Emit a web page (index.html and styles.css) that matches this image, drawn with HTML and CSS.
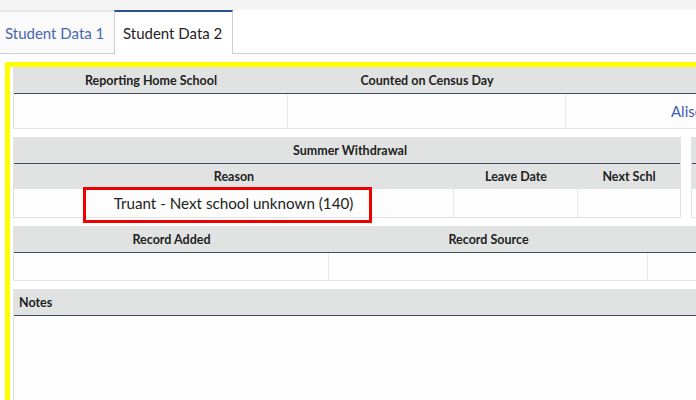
FILE: index.html
```html
<!DOCTYPE html>
<html>
<head>
<meta charset="utf-8">
<link rel="stylesheet" href="styles.css">
</head>
<body>
<div class="topbar"></div>
<div class="tabs">
  <div class="tab first">Student Data 1</div>
  <div class="tab active">Student Data 2</div>
  <div class="tab-fill"></div>
</div>
<div class="frame">
  <div class="panel p1">
    <div class="row hdr">
      <div class="cell c1">Reporting Home School</div>
      <div class="cell c2">Counted on Census Day</div>
      <div class="cell c3"></div>
    </div>
    <div class="row data d1">
      <div class="cell c1"></div>
      <div class="cell c2"></div>
      <div class="cell c3 link">Alison</div>
    </div>
  </div>

  <div class="pair">
    <div class="panel p2">
      <div class="row hdr span">Summer Withdrawal</div>
      <div class="row sub">
        <div class="cell w1">Reason</div>
        <div class="cell w2">Leave Date</div>
        <div class="cell w3">Next Schl</div>
      </div>
      <div class="row data d2">
        <div class="cell w1 val">Truant - Next school unknown (140)</div>
        <div class="cell w2"></div>
        <div class="cell w3"></div>
      </div>
      <div class="highlight"></div>
    </div>
    <div class="panel p2b">
      <div class="row hdr"></div>
      <div class="row sub"></div>
      <div class="row data d2"></div>
    </div>
  </div>

  <div class="panel p3">
    <div class="row hdr">
      <div class="cell r1">Record Added</div>
      <div class="cell r2">Record Source</div>
      <div class="cell r3"></div>
    </div>
    <div class="row data d3">
      <div class="cell r1"></div>
      <div class="cell r2"></div>
      <div class="cell r3"></div>
    </div>
  </div>

  <div class="panel p4">
    <div class="row hdr left">Notes</div>
    <div class="notes-body"></div>
  </div>
</div>
</body>
</html>
```
FILE: styles.css
```css
* { box-sizing: border-box; }
html, body {
  margin: 0;
  padding: 0;
  background: #ffffff;
  overflow: hidden;
  width: 696px;
  height: 400px;
}
body {
  font-family: Lato, "Noto Sans", sans-serif;
  color: #222;
}
.topbar {
  height: 10px;
  background: #f4f4f4;
}
.tabs {
  display: flex;
  height: 44px;
}
.tab {
  height: 44px;
  padding: 0 7px;
  display: flex;
  align-items: center;
  font-size: 15px;
  border-top: 2px solid #e6e6e6;
  border-bottom: 1px solid #cfcfcf;
  color: #4866b0;
  background: #fafafa;
}
.tab.first {
  width: 114px;
  padding-left: 5px;
}
.tab.active {
  width: 119px;
  padding-left: 8px;
  color: #222;
  background: #fff;
  border-top: 2px solid #2c4f9e;
  border-left: 1px solid #cfcfcf;
  border-right: 1px solid #cfcfcf;
  border-bottom: none;
}
.tab-fill {
  flex: 1;
  border-bottom: 1px solid #cfcfcf;
}
.frame {
  margin-top: 8px;
  margin-left: 5px;
  width: 1000px;
  height: 400px;
  border: 5px solid #ffff00;
  border-bottom: none;
  padding: 0 0 0 3px;
  display: flex;
  flex-direction: column;
  gap: 8px;
}
.panel {
  border: 1px solid #e3e3e3;
  background: #fdfdfd;
  position: relative;
}
.row {
  display: flex;
}
.hdr {
  height: 26px;
  padding-bottom: 1px;
  background: #e1e2e2;
  border-bottom: 1px solid #3d4b63;
  font-size: 12.5px;
  font-weight: 700;
  color: #222;
  align-items: center;
}
.hdr.span {
  justify-content: center;
  padding-left: 6px;
}
.hdr.left {
  padding-left: 5px;
}
.sub {
  height: 25px;
  background: #e1e2e2;
  font-size: 12.5px;
  font-weight: 700;
  align-items: center;
}
.cell {
  height: 100%;
  display: flex;
  align-items: center;
  justify-content: center;
  flex: none;
}
.data .cell {
  border-right: 1px solid #e6e8ea;
}
.data .cell:last-child { border-right: none; }
.d1 { height: 34px; }
.d2 { height: 28px; }
.d3 { height: 27px; }
.c1 { width: 274px; }
.c2 { width: 278px; }
.c3 { width: 400px; justify-content: flex-start; padding-left: 105px; }
.link {
  color: #3d5cb5;
  font-size: 15px;
}
.pair {
  display: flex;
  gap: 10px;
}
.p2 { width: 668px; }
.p2b { width: 200px; }
.w1 { width: 440px; }
.w2 { width: 124px; }
.w3 { width: 102px; }
.val {
  font-size: 15.2px;
  color: #222;
}
.highlight {
  position: absolute;
  left: 69px;
  top: 49px;
  width: 289px;
  height: 36px;
  border: 3px solid #ee0000;
}
.r1 { width: 315px; }
.r2 { width: 319px; }
.r3 { width: 300px; }
.p4 { flex: 1; }
.notes-body { height: 200px; }
```
